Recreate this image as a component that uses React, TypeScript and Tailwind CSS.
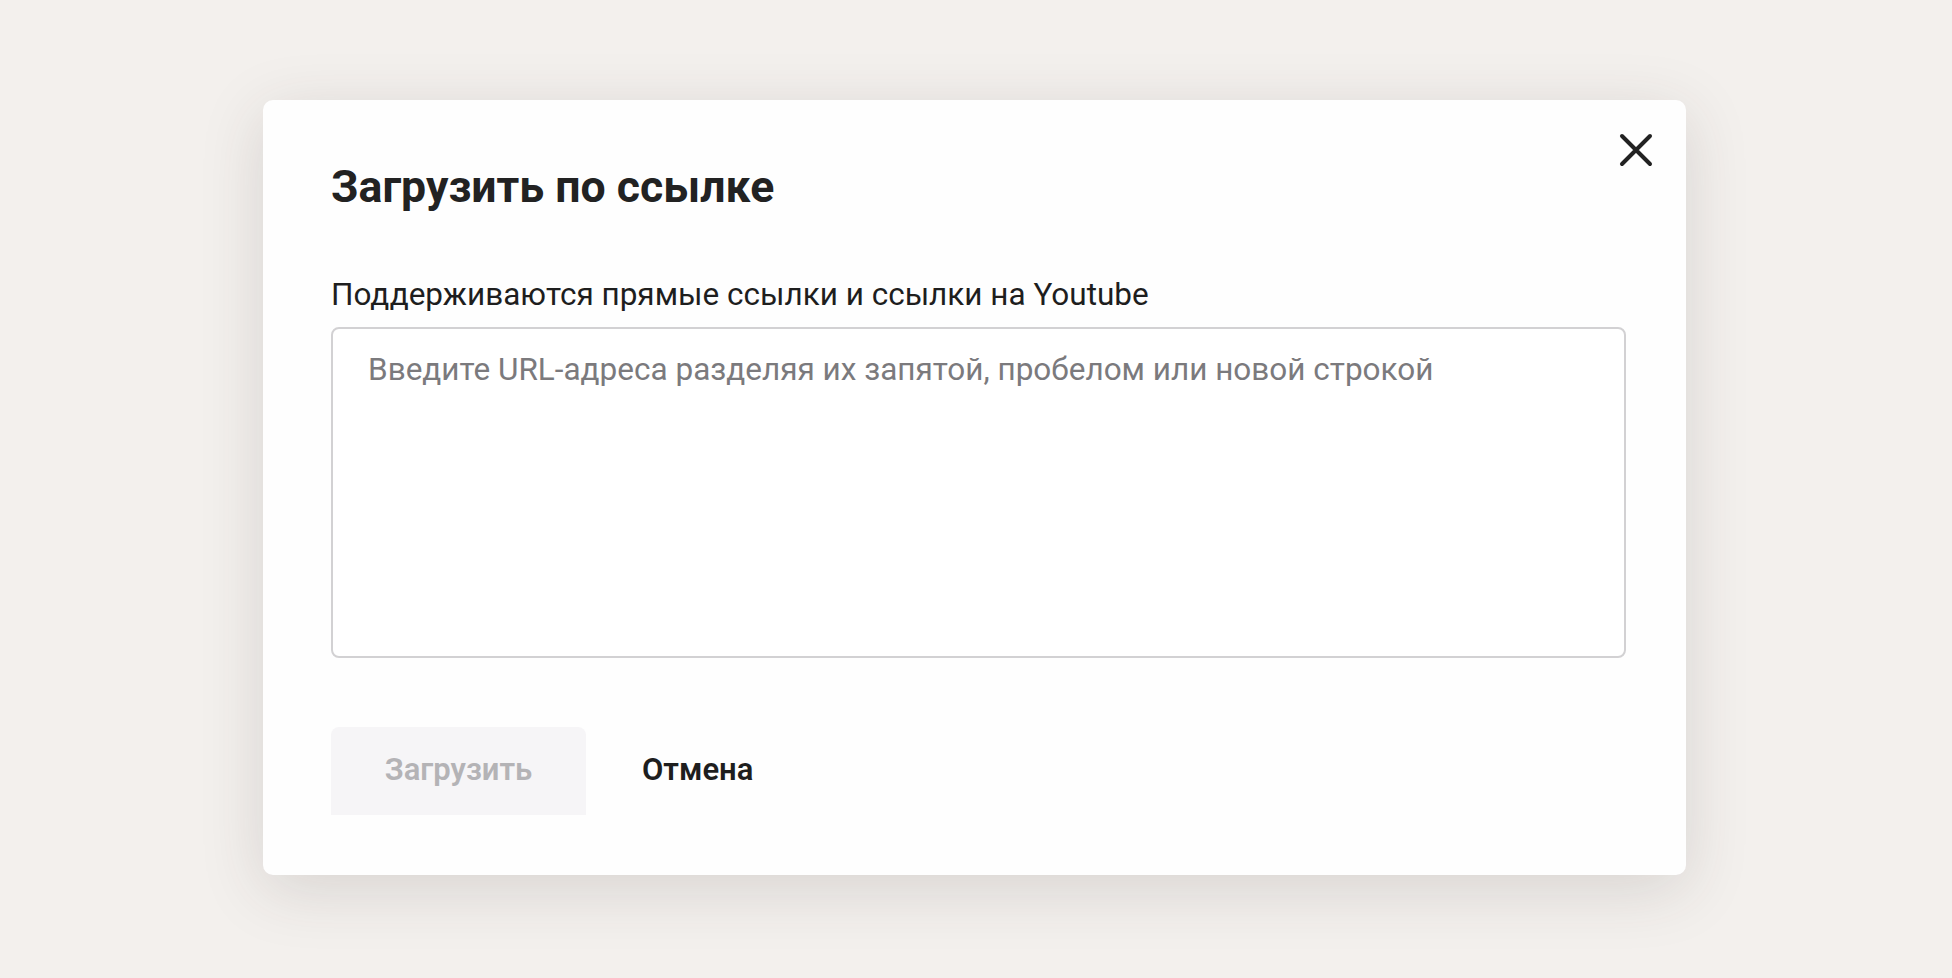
import React from "react";

export default function App() {
  return (
    <div
      className="flex h-[978px] w-full items-start bg-[#f3f0ed] pl-[263px] pt-[100px]"
      style={{ fontFamily: "Roboto, 'Noto Sans', sans-serif" }}
    >
      <div className="relative flex h-[775px] w-[1423px] flex-col rounded-[10px] bg-[#fefefe] pl-[68px] pr-[60px] pt-[63px] shadow-[0_14px_64px_rgba(60,50,50,0.15)]">
        <button className="absolute right-[33px] top-[33px] flex h-[34px] w-[34px] items-center justify-center">
          <svg width="34" height="34" viewBox="0 0 34 34" fill="none">
            <path d="M3 3L31 31M31 3L3 31" stroke="#222" strokeWidth="4" strokeLinecap="round" />
          </svg>
        </button>
        <h1 className="text-[44.6px] font-bold leading-[48px] text-[#222]">Загрузить по ссылке</h1>
        <p className="mt-[65.5px] text-[31.5px] leading-[36px] text-[#1e1e1e]">
          Поддерживаются прямые ссылки и ссылки на Youtube
        </p>
        <textarea
          className="mt-[14px] h-[331px] w-full resize-none rounded-[8px] border-2 border-[#d2d1d3] bg-white px-[35px] pt-[22.5px] text-[31.5px] leading-[38px] text-[#222] outline-none placeholder:text-[#7b7a7d]"
          placeholder="Введите URL-адреса разделяя их запятой, пробелом или новой строкой"
        />
        <div className="mt-[69px] flex items-center gap-[56px]">
          <button className="flex h-[88px] w-[255px] items-center justify-center rounded-t-[8px] bg-[#f6f5f7] text-[31px] font-semibold text-[#b4b3b6]">
            Загрузить
          </button>
          <button className="text-[31px] font-semibold text-[#1e1e1e]">Отмена</button>
        </div>
      </div>
    </div>
  );
}
